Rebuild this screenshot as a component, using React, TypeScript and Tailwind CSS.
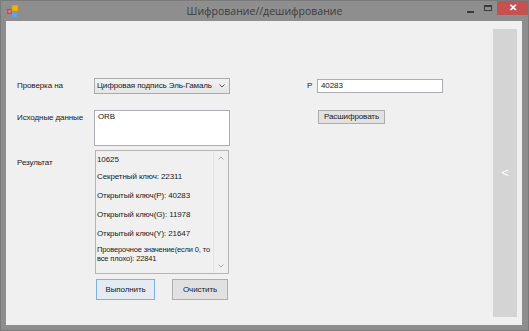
import React from "react";

const ui = { fontFamily: '"Liberation Sans", Arial, sans-serif' } as React.CSSProperties;

function AppIcon() {
  return (
    <svg width="12" height="13" viewBox="0 0 12 13">
      <rect x="0" y="4" width="5" height="5" fill="#d8453d" />
      <rect x="1.5" y="5.5" width="2" height="2" fill="#f4a09a" />
      <rect x="5" y="0" width="6" height="6" fill="#f0b400" stroke="#d89a00" strokeWidth="0.8" />
      <rect x="5" y="7" width="5" height="5" fill="#6aa0e0" />
    </svg>
  );
}

export default function App() {
  return (
    <div className="w-[529px] h-[331px] bg-[#8e8e8e] flex flex-col border border-[#7a7a7a] overflow-hidden" style={ui}>
      {/* title bar */}
      <div className="h-[20px] flex items-start relative">
        <div className="ml-[6px] mt-[4px]">
          <AppIcon />
        </div>
        <div
          className="absolute left-0 right-0 top-[3px] text-center text-[10.5px] text-[#3c3c3c] leading-[14px]"
          style={{ fontFamily: '"Open Sans", "Noto Sans", sans-serif' }}
        >
          Шифрование//дешифрование
        </div>
        <div className="ml-auto flex items-start">
          <div className="w-[7px] h-[2px] bg-[#3a3a3a] mt-[10px] mr-[10px]" />
          <div className="w-[8px] h-[6px] border border-[#3a3a3a] border-t-2 mt-[4px] mr-[5px]" />
          <div className="w-[31px] h-[15px] bg-[#c75050] flex items-center justify-center text-white text-[10px] font-bold leading-none -mt-px">
            ✕
          </div>
        </div>
      </div>

      {/* body row */}
      <div className="flex flex-1">
        <div className="w-[5px]" />
        <div className="w-[516px] h-[304px] bg-[#f0f0f0] flex">
          {/* form */}
          <div className="flex-1 flex flex-col pl-[11px] text-[8px] text-[#1a1a1a] leading-[10px] tracking-[-0.1px]">
            {/* row 1 */}
            <div className="flex items-start mt-[57px]">
              <div className="w-[77px] mt-[3px]">Проверка на</div>
              <div className="w-[136px] h-[16px] border border-[#acacac] bg-gradient-to-b from-[#f2f2f2] to-[#e5e5e5] flex items-center pl-[2px] pr-[4px]">
                <span className="flex-1">Цифровая подпись Эль-Гамаль</span>
                <svg width="6" height="4" viewBox="0 0 6 4">
                  <path d="M0.5 0.5 L3 3 L5.5 0.5" stroke="#555" strokeWidth="1" fill="none" />
                </svg>
              </div>
              <div className="ml-[77px] mt-[3px] w-[10px]">P</div>
              <div className="w-[126px] h-[14px] border border-[#abadb3] bg-white pl-[3px] mt-[1px] leading-[12px]">40283</div>
            </div>
            {/* row 2 */}
            <div className="flex items-start mt-[16px]">
              <div className="w-[77px] mt-[3px]">Исходные данные</div>
              <div className="w-[136px] h-[36px] border border-[#abadb3] bg-white pl-[3px] pt-[1px]">ORB</div>
              <div className="ml-[88px] w-[67px] h-[14px] border border-[#adadad] bg-[#e1e1e1] flex items-center justify-center">
                Расшифровать
              </div>
            </div>
            {/* row 3 */}
            <div className="flex items-start mt-[4px]">
              <div className="w-[78px] mt-[8px]">Результат</div>
              <div className="w-[134px] h-[124px] border border-[#b5b5b5] bg-[#f0f0f0] flex">
                <div className="flex-1 pl-[1px] pt-[4px] flex flex-col whitespace-nowrap">
                  <div>10625</div>
                  <div className="mt-[7px]">Секретный ключ: 22311</div>
                  <div className="mt-[9px]">Открытый ключ(P): 40283</div>
                  <div className="mt-[9px]">Открытый ключ(G): 11978</div>
                  <div className="mt-[9px]">Открытый ключ(Y): 21647</div>
                  <div className="mt-[6px] leading-[9px] text-[7.5px] tracking-[-0.15px]">
                    Проверочное значение(если 0, то
                    <br />
                    все плохо): 22841
                  </div>
                </div>
                <div className="w-[15px] border-l border-[#e4e4e4] bg-[#f0f0f0] flex flex-col items-center justify-between py-[5px]">
                  <svg width="6" height="4" viewBox="0 0 6 4">
                    <path d="M0.5 3.5 L3 1 L5.5 3.5" stroke="#b0b0b0" strokeWidth="1" fill="none" />
                  </svg>
                  <svg width="6" height="4" viewBox="0 0 6 4">
                    <path d="M0.5 0.5 L3 3 L5.5 0.5" stroke="#b0b0b0" strokeWidth="1" fill="none" />
                  </svg>
                </div>
              </div>
            </div>
            {/* row 4 */}
            <div className="flex items-start mt-[5px] pl-[79px]">
              <div className="w-[59px] h-[21px] border border-[#7eb0e2] bg-[#e5ebf2] flex items-center justify-center">
                Выполнить
              </div>
              <div className="ml-[17px] w-[56px] h-[21px] border border-[#adadad] bg-[#e1e1e1] flex items-center justify-center">
                Очистить
              </div>
            </div>
          </div>
          {/* right bar */}
          <div className="w-[24px] h-[288px] mt-[8px] mr-[5px] bg-[#d4d4d4] flex items-center justify-center text-white text-[13px]">
            &lt;
          </div>
        </div>
      </div>
      <div className="h-[5px]" />
    </div>
  );
}
